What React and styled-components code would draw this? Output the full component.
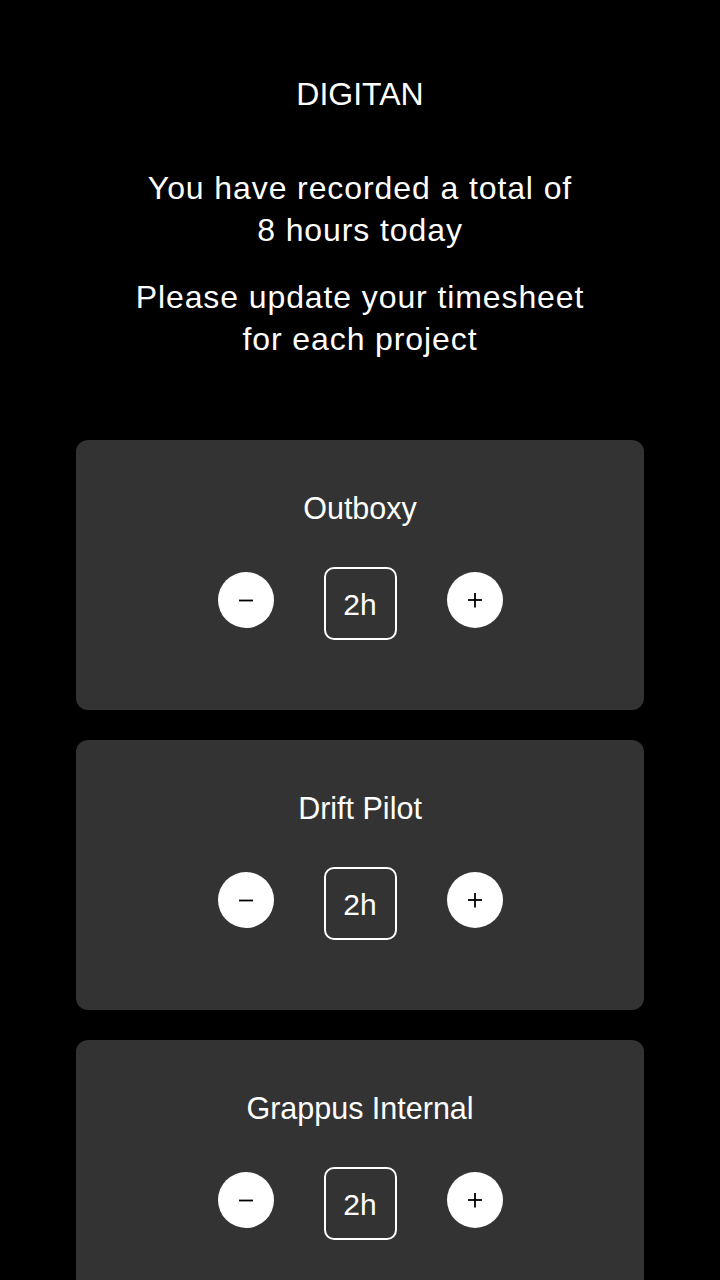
import React from "react";
import styled, { createGlobalStyle } from "styled-components";

const GlobalStyle = createGlobalStyle`
  html, body {
    margin: 0;
    padding: 0;
    background: #000;
  }
  body {
    font-family: "Liberation Sans", Arial, Helvetica, sans-serif;
    color: #fff;
  }
`;

const Page = styled.main`
  display: flex;
  flex-direction: column;
  align-items: center;
  padding: 74px 76px 0;
  box-sizing: border-box;
  overflow: hidden;
  height: 1280px;
`;

const Brand = styled.h1`
  margin: 0;
  font-size: 32px;
  line-height: 40px;
  font-weight: 400;
  text-align: center;
`;

const Message = styled.p`
  margin: ${(p) => p.$gap}px 0 0;
  font-size: 32px;
  line-height: 42px;
  letter-spacing: 0.9px;
  text-align: center;
  font-weight: 400;
`;

const CardList = styled.section`
  margin-top: 80px;
  width: 100%;
  display: flex;
  flex-direction: column;
  gap: 30px;
`;

const Card = styled.article`
  background: #333333;
  border-radius: 12px;
  padding: 50px 0 70px;
  display: flex;
  flex-direction: column;
  align-items: center;
`;

const ProjectName = styled.h2`
  margin: 0;
  font-size: 30.5px;
  line-height: 36px;
  font-weight: 400;
`;

const Controls = styled.div`
  margin-top: 41px;
  display: flex;
  align-items: center;
  gap: 50px;
`;

const RoundButton = styled.button`
  width: 56px;
  height: 56px;
  margin-bottom: 7px;
  border: none;
  border-radius: 50%;
  background: #fff;
  padding: 0;
  display: flex;
  align-items: center;
  justify-content: center;
  cursor: pointer;
`;

const HoursBox = styled.div`
  width: 73px;
  height: 73px;
  box-sizing: border-box;
  border: 2px solid #fff;
  border-radius: 10px;
  display: flex;
  align-items: center;
  justify-content: center;
  font-size: 30px;
  line-height: 1;
  padding-top: 2px;
`;

const MinusIcon = () => (
  <svg width="16" height="16" viewBox="0 0 16 16" aria-hidden="true">
    <line x1="1" y1="8.5" x2="15" y2="8.5" stroke="#000" strokeWidth="1.8" />
  </svg>
);

const PlusIcon = () => (
  <svg width="16" height="16" viewBox="0 0 16 16" aria-hidden="true">
    <line x1="1" y1="8" x2="15" y2="8" stroke="#000" strokeWidth="1.8" />
    <line x1="8" y1="1" x2="8" y2="15.5" stroke="#000" strokeWidth="1.8" />
  </svg>
);

const projects = [
  { name: "Outboxy", hours: 2 },
  { name: "Drift Pilot", hours: 2 },
  { name: "Grappus Internal", hours: 2 },
];

export default function App() {
  return (
    <>
      <GlobalStyle />
      <Page>
        <Brand>DIGITAN</Brand>
        <Message $gap={53}>
          You have recorded a total of
          <br />8 hours today
        </Message>
        <Message $gap={25}>
          Please update your timesheet
          <br />
          for each project
        </Message>
        <CardList>
          {projects.map((p) => (
            <Card key={p.name}>
              <ProjectName>{p.name}</ProjectName>
              <Controls>
                <RoundButton aria-label="decrease">
                  <MinusIcon />
                </RoundButton>
                <HoursBox>{p.hours}h</HoursBox>
                <RoundButton aria-label="increase">
                  <PlusIcon />
                </RoundButton>
              </Controls>
            </Card>
          ))}
        </CardList>
      </Page>
    </>
  );
}
